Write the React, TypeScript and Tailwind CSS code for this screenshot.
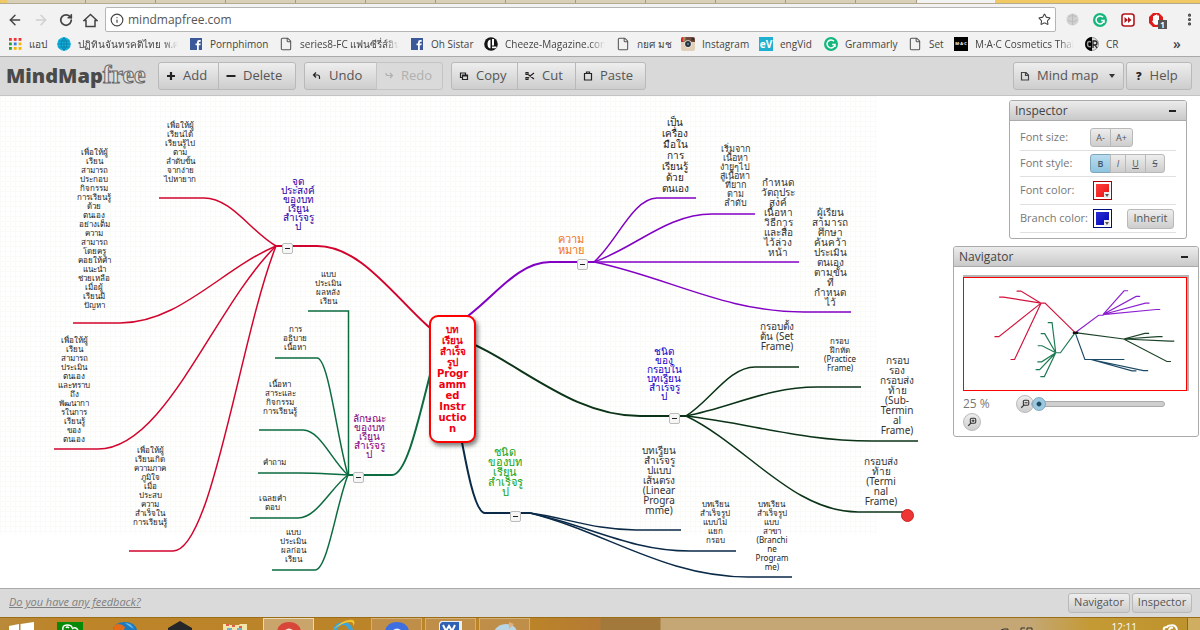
import React from "react";
import { ArrowLeft, ArrowRight, Info, RotateCw, Star, EllipsisVertical, File } from "lucide-react";

/* ---------- Mind map data ---------- */

type Topic = { x: number; y: number; style: string; text: string };

const SMALL = "text-[8px] leading-[9px] text-[#222]";
const MEDIUM = "text-[10px] leading-[10px] text-[#333]";
const LARGE = "text-[10px] leading-[11px] text-[#222]";

const topics: Topic[] = [
  { x: 180, y: 24, style: SMALL, text: "เพื่อให้ผู้\nเรียนได้\nเรียนรู้ไป\nตาม\nลำดับขั้น\nจากง่าย\nไปหายาก" },
  { x: 94, y: 51, style: SMALL, text: "เพื่อให้ผู้\nเรียน\nสามารถ\nประกอบ\nกิจกรรม\nการเรียนรู้\nด้วย\nตนเอง\nอย่างเต็ม\nความ\nสามารถ\nโดยครู\nคอยให้คำ\nแนะนำ\nช่วยเหลือ\nเมื่อผู้\nเรียนมี\nปัญหา" },
  { x: 74, y: 239, style: SMALL, text: "เพื่อให้ผู้\nเรียน\nสามารถ\nประเมิน\nตนเอง\nและทราบ\nถึง\nพัฒนากา\nรในการ\nเรียนรู้\nของ\nตนเอง" },
  { x: 150, y: 349, style: SMALL, text: "เพื่อให้ผู้\nเรียนเกิด\nความภาค\nภูมิใจ\nเมื่อ\nประสบ\nความ\nสำเร็จใน\nการเรียนรู้" },
  { x: 298, y: 81, style: "text-[10px] leading-[9px] font-medium text-[#2b00a8]", text: "จุด\nประสงค์\nของบท\nเรียน\nสำเร็จรู\nป" },
  { x: 328, y: 173, style: SMALL, text: "แบบ\nประเมิน\nผลหลัง\nเรียน" },
  { x: 295, y: 228, style: SMALL, text: "การ\nอธิบาย\nเนื้อหา" },
  { x: 280, y: 283, style: SMALL, text: "เนื้อหา\nสาระและ\nกิจกรรม\nการเรียนรู้" },
  { x: 274, y: 361, style: SMALL, text: "คำถาม" },
  { x: 272, y: 397, style: SMALL, text: "เฉลยคำ\nตอบ" },
  { x: 293, y: 431, style: SMALL, text: "แบบ\nประเมิน\nผลก่อน\nเรียน" },
  { x: 369, y: 318, style: "text-[10px] leading-[9px] font-medium text-[#85007d]", text: "ลักษณะ\nของบท\nเรียน\nสำเร็จรู\nป" },
  { x: 571, y: 137, style: "text-[11px] leading-[11px] font-medium text-[#f0731c]", text: "ความ\nหมาย" },
  { x: 675, y: 21, style: LARGE, text: "เป็น\nเครื่อง\nมือใน\nการ\nเรียนรู้\nด้วย\nตนเอง" },
  { x: 735, y: 48, style: "text-[9px] leading-[9px] text-[#333]", text: "เริ่มจาก\nเนื้อหา\nง่ายๆไป\nสู่เนื้อหา\nที่ยาก\nตาม\nลำดับ" },
  { x: 778, y: 81, style: MEDIUM, text: "กำหนด\nวัตถุประ\nสงค์\nเนื้อหา\nวิธีการ\nและสื่อ\nไว้ล่วง\nหน้า" },
  { x: 830, y: 111, style: MEDIUM, text: "ผู้เรียน\nสามารถ\nศึกษา\nค้นคว้า\nประเมิน\nตนเอง\nตามขั้น\nที่\nกำหนด\nไว้" },
  { x: 664, y: 251, style: "text-[10px] leading-[9px] font-medium text-[#1400c8]", text: "ชนิด\nของ\nกรอบใน\nบทเรียน\nสำเร็จรู\nป" },
  { x: 777, y: 225, style: MEDIUM, text: "กรอบตั้ง\nต้น (Set\nFrame)" },
  { x: 840, y: 240, style: SMALL, text: "กรอบ\nฝึกหัด\n(Practice\nFrame)" },
  { x: 897, y: 259, style: MEDIUM, text: "กรอบ\nรอง\nกรอบส่ง\nท้าย\n(Sub-\nTermin\nal\nFrame)" },
  { x: 881, y: 360, style: MEDIUM, text: "กรอบส่ง\nท้าย\n(Termi\nnal\nFrame)" },
  { x: 659, y: 349, style: MEDIUM, text: "บทเรียน\nสำเร็จรู\nปแบบ\nเส้นตรง\n(Linear\nProgra\nmme)" },
  { x: 715, y: 403, style: SMALL, text: "บทเรียน\nสำเร็จรูป\nแบบไม่\nแยก\nกรอบ" },
  { x: 772, y: 403, style: SMALL, text: "บทเรียน\nสำเร็จรูป\nแบบ\nสาขา\n(Branchi\nne\nProgram\nme)" },
  { x: 505, y: 351, style: "text-[11px] leading-[10px] font-medium text-[#12a312]", text: "ชนิด\nของบท\nเรียน\nสำเร็จรู\nป" },
];

const handles = [
  { x: 282, y: 147 },
  { x: 577, y: 163 },
  { x: 353, y: 376 },
  { x: 669, y: 317 },
  { x: 510, y: 415 },
];

type Twig = [number, number, number]; // outer x, inner x, y

const branches: { color: string; from: [number, number]; to: [number, number]; hub: [number, number]; twigs: Twig[] }[] = [
  { color: "#d2042d", from: [452, 249], to: [317, 150], hub: [276, 150], twigs: [[159, 204, 102], [73, 120, 227], [54, 98, 353], [129, 173, 455]] },
  { color: "#8200c4", from: [455, 229], to: [550, 166], hub: [594, 166], twigs: [[696, 657, 102], [755, 712, 118], [799, 750, 166], [851, 804, 216]] },
  { color: "#0c6b40", from: [446, 226], to: [392, 379], hub: [348, 379], twigs: [[275, 317, 262], [259, 303, 334], [258, 300, 377], [250, 298, 422], [272, 315, 474]] },
  { color: "#0b3318", from: [452, 239], to: [640, 320], hub: [686, 320], twigs: [[799, 755, 271], [861, 817, 291], [918, 872, 345], [908, 858, 416]] },
  { color: "#0a2a48", from: [442, 249], to: [485, 417], hub: [530, 417], twigs: [[681, 636, 434], [736, 690, 455], [792, 748, 481]] },
];

function curve([cx, cy]: [number, number], [px, py]: [number, number]) {
  const w = px - cx;
  const h = py - cy;
  return `C${cx + w * 0.38} ${cy} ${cx + w * 0.65} ${cy + h * 0.7} ${px} ${py}`;
}

function Branches() {
  return (
    <svg className="absolute left-0 top-0 h-[492px] w-[1000px]" viewBox="0 0 1000 492" fill="none" aria-hidden="true">
      {branches.map((b) => (
        <g key={b.color} stroke={b.color}>
          <path strokeWidth="2" d={`M${b.hub[0]} ${b.hub[1]} L${b.to[0]} ${b.to[1]} ${curve(b.to, b.from)}`} />
          {b.twigs.map(([outer, inner, y]) => (
            <path key={y} strokeWidth="1.5" d={`M${outer} ${y} H${inner} ${curve([inner, y], b.hub)}`} />
          ))}
        </g>
      ))}
      <path d="M308 215 H348.500 V379" stroke="#0c6b40" strokeWidth="1.500" />
    </svg>
  );
}

/* ---------- Small shared parts ---------- */

const FACE = "border border-[#b9b9b9] bg-linear-to-b from-[#eeeeee] to-[#cdcdcd] text-[#555]";

function ToolIcon({ children }: { children: React.ReactNode }) {
  return (
    <svg className="size-3 shrink-0" viewBox="0 0 12 12" fill="none" stroke="currentColor" strokeWidth="1.2" aria-hidden="true">
      {children}
    </svg>
  );
}

const icons = {
  add: <path d="M6 2v8M2 6h8" strokeWidth="2.200" stroke="#222" />,
  remove: <path d="M1.500 6h9" strokeWidth="2" stroke="#222" />,
  undo: <path d="M5 2.500 2.500 5 5 7.500M2.500 5h4q2 0 2 2v2" stroke="#222" />,
  redo: <path d="M7 3 9.500 5.500 7 8M9.500 5.500H5q-2 0-2-2V3" />,
  copy: <path d="M4 7.500H2.500V3h5v1.500M4.500 5h5v4.500h-5zM4.500 6h5" stroke="#222" />,
  cut: <path d="M3.500 4 10 9M3.500 8 10 3M2 2.500h2v2H2zM2 7.500h2v2H2z" stroke="#222" />,
  paste: <path d="M2.500 3.500h7v6.500h-7zM4.500 3.500V2h3v1.500" stroke="#222" />,
  doc: <path d="M2.500 2.500h4.500l2.500 2.500V10h-7zM6.500 2.500v3h3" stroke="#444" />,
};

function ToolButton({ icon, label, className, disabled }: { icon: React.ReactNode; label: string; className: string; disabled?: boolean }) {
  return (
    <button
      type="button"
      disabled={disabled}
      className={`-ml-px flex h-7 items-center gap-1.5 pl-[6px] ${
        disabled ? "border border-[#c4c4c4] bg-[#dadada] text-[#b0b0b0]" : FACE
      } ${className}`}
    >
      <ToolIcon>{icon}</ToolIcon>
      {label}
    </button>
  );
}

/* ---------- Browser chrome ---------- */

function Facebook() {
  return (
    <svg viewBox="0 0 14 14" className="size-3.5">
      <rect x="1" y="1" width="12" height="12" fill="#3b5998" />
      <path d="M8 13V8.300H6.500V6.500H8V5.400Q8 3 10.200 3h1.500v1.800h-1Q9.800 4.800 9.800 5.700v.8h1.900l-.3 1.800H9.800V13z" fill="#fff" />
    </svg>
  );
}

function Page() {
  return <File className="size-3.5 text-[#555]" strokeWidth={1.8} />;
}

function AppsGrid() {
  const colors = ["#e33", "#e33", "#e33", "#2a9d3a", "#3b78e7", "#f4b400", "#2a9d3a", "#f4b400", "#f4b400"];
  return (
    <svg viewBox="0 0 14 14" className="size-3.5">
      {colors.map((c, i) => (
        <rect key={i} x={1 + (i % 3) * 4.800} y={1 + Math.floor(i / 3) * 4.500} width="2.800" height="2.800" fill={c} />
      ))}
    </svg>
  );
}

function Globe() {
  return (
    <svg viewBox="0 0 14 14" className="size-3.5" fill="none">
      <circle cx="7" cy="7" r="6.800" fill="#12b0dc" />
      <path d="M0.500 7h13M1.500 4h11M1.500 10h11M7 0.500v13M7 .5q-6 6.500 0 13M7 .5q6 6.500 0 13" stroke="#0a7299" strokeWidth=".6" />
    </svg>
  );
}

function Cheeze() {
  return (
    <svg viewBox="0 0 14 14" className="size-3.5">
      <circle cx="7" cy="7" r="6.800" fill="#151515" />
      <path d="M6.500 2.500Q3.500 3 3.500 7t3 4.500zM8 2h2v6.500H8zM8 9.500h4.500v1.800H8z" fill="#fff" />
    </svg>
  );
}

function Instagram() {
  return (
    <svg viewBox="0 0 14 14" className="size-3.5">
      <rect width="14" height="14" rx="2" fill="#e2cfb8" />
      <path d="M0 5V2q0-2 2-2h10q2 0 2 2v3z" fill="#73493a" />
      <path d="M1 0h1.500v4.500H1z" fill="#d33" />
      <path d="M2.500 0h1.200v4.500H2.500z" fill="#e9b42a" />
      <path d="M3.700 0h1v4.500h-1z" fill="#4b86c8" />
      <circle cx="7" cy="7" r="3.700" fill="#f1e8dc" />
      <circle cx="7" cy="7" r="2.900" fill="#24303c" />
      <circle cx="7" cy="7" r="1.200" fill="#5b7894" />
      <rect x="10.500" y="1" width="2.500" height="2.500" fill="#26323c" />
    </svg>
  );
}

function Grammarly() {
  return (
    <svg viewBox="0 0 14 14" className="size-3.5" fill="none">
      <circle cx="7" cy="7" r="7" fill="#15b77d" />
      <path d="M10 4.200A4 4 0 1 0 11 7.500H8.200M11 7.500v2.500" stroke="#fff" strokeWidth="1.500" />
    </svg>
  );
}

const Badge = ({ text, className }: { text: string; className: string }) => (
  <span className={`flex size-3.5 items-center justify-center overflow-hidden ${className}`}>{text}</span>
);

const FADE = "overflow-hidden mask-r-from-85% mask-r-to-100%";

const bookmarks: { icon: React.ReactNode; label: string; width: string }[] = [
  { icon: <AppsGrid />, label: "แอป", width: "w-[17px]" },
  { icon: <Globe />, label: "ปฏิทินจันทรคติไทย พ.ศ.2", width: `w-[100px] ${FADE}` },
  { icon: <Facebook />, label: "Pornphimon", width: "w-[58px]" },
  { icon: <Page />, label: "series8-FC แฟนซีรี่ส์อิน", width: `w-[99px] ${FADE}` },
  { icon: <Facebook />, label: "Oh Sistar", width: "w-[42px]" },
  { icon: <Cheeze />, label: "Cheeze-Magazine.com", width: `w-[100px] ${FADE}` },
  { icon: <Page />, label: "กยศ มช", width: "w-[33px]" },
  { icon: <Instagram />, label: "Instagram", width: "w-[46px]" },
  { icon: <Badge text="eV" className="bg-[#1fb0d0] text-[10px] font-bold text-white" />, label: "engVid", width: "w-[33px]" },
  { icon: <Grammarly />, label: "Grammarly", width: "w-[52px]" },
  { icon: <Page />, label: "Set", width: "w-[14px]" },
  { icon: <Badge text="M·A·C" className="bg-black text-[4px] font-bold text-white" />, label: "M·A·C Cosmetics Thai", width: `w-[99px] ${FADE}` },
  {
    icon: (
      <svg viewBox="0 0 14 14" className="size-3.5" fill="none">
        <circle cx="7" cy="7" r="6.500" fill="#ddd" stroke="#999" />
        <path d="M7 0a7 7 0 0 0 0 14z" fill="#000" />
        <path d="M6 5Q2.500 3.500 2.500 7T6 9.500" stroke="#999" strokeWidth="1.500" />
        <path d="M8 11V4h2q2 0 2 2t-2 2H8M10 8l2 3" stroke="#222" strokeWidth="1.300" />
      </svg>
    ),
    label: "CR",
    width: "w-[14px]",
  },
];

function BrowserChrome() {
  return (
    <div className="shrink-0 border-b border-[#a9a9a9] bg-[#f2f2f2] font-['Open_Sans','Noto_Sans',sans-serif] text-[#444]">
      <div className="flex h-1 overflow-hidden border-b border-[#b3aa90] bg-[#d8d0b8]">
        <i className="w-4 shrink-0 bg-linear-to-r from-[#f0c864] from-40% to-[#d8d0b8] to-50%" />
        {[0, 1, 2, 3, 4, 5, 6, 7, 8, 9, 10, 11].map((n) => (
          <i key={n} className="w-[70px] shrink-0 border-r border-[#a59c80]" />
        ))}
        <i className="w-[61px] shrink-0 border-r border-[#a59c80]" />
        <i className="h-1 w-[78px] shrink-0 bg-[#f2f2f2]" />
        <i className="flex-1 bg-[#f0c864]" />
      </div>
      <div className="flex h-7 items-end px-[7px]">
        <nav className="flex h-6 items-center gap-[10px]" aria-label="Browser">
          <button type="button" aria-label="Back"><ArrowLeft className="size-4" strokeWidth={2.200} /></button>
          <button type="button" aria-label="Forward" disabled className="text-[#d0d0d0]"><ArrowRight className="size-4" strokeWidth={2.200} /></button>
          <button type="button" aria-label="Reload"><RotateCw className="size-[14px]" strokeWidth={3} /></button>
          <button type="button" aria-label="Home">
            <svg viewBox="0 0 15 15" className="size-[15px]" fill="none" stroke="currentColor" strokeWidth="1.500"><path d="M1 7.500 7.500 1.500 14 7.500H12V13.500H3V7.500z" /></svg>
          </button>
        </nav>
        <div className="ml-[7px] flex h-[25px] flex-1 items-center gap-1 rounded-[2px] border border-[#b5b5b5] bg-white px-1">
          <Info className="size-[14px]" strokeWidth={2} />
          <input aria-label="Address" defaultValue="mindmapfree.com" className="min-w-0 flex-1 bg-transparent text-[12px] text-[#555] outline-none" />
          <button type="button" aria-label="Bookmark this page"><Star className="size-[13px]" strokeWidth={2} /></button>
        </div>
        <div className="flex h-[25px] items-center gap-[14px] pl-[10px]">
          <svg viewBox="0 0 14 14" className="size-[13px]"><circle cx="7" cy="7" r="6.500" fill="#d0d0d0" /><path d="M3 4q4-3 8 0M2 8q5 3 10 0M7 1v12" stroke="#bbb" fill="none" /></svg>
          <Grammarly />
          <svg viewBox="0 0 14 14" className="size-3.5" fill="none"><rect x="1" y="1" width="12" height="12" rx="2.500" fill="#fff" stroke="#b3161b" strokeWidth="1.600" /><path d="M3.500 4 7 7 3.500 10zM7 4l3.500 3L7 10z" fill="#b3161b" /></svg>
          <span className="relative">
            <svg viewBox="0 0 14 14" className="size-3.5"><path d="M4 0h6l4 4v6l-4 4H4l-4-4V4z" fill="#e01b1b" /><path d="M4 6V3h1.500V2H7v-.5h1.300V2.500H10V9q0 3-3 3-2 0-4-4l1-.5z" fill="#fff" /></svg>
            <span className="absolute -right-1 top-[7px] h-[9px] w-[9px] bg-[#555] text-center text-[8px] leading-[9px] font-bold text-white">1</span>
          </span>
          <button type="button" aria-label="Menu" className="-mr-1 ml-[5px]"><EllipsisVertical className="size-[15px]" strokeWidth={3} /></button>
        </div>
      </div>
      <div className="flex h-6 items-center gap-[11px] pl-2">
        {bookmarks.map((b, i) => (
          <a key={i} href="#" className="flex shrink-0 items-center gap-[7px] text-[10px] leading-[16px] whitespace-nowrap">
            <span className="size-3.5 shrink-0">{b.icon}</span>
            <span className={b.width}>{b.label}</span>
          </a>
        ))}
        <button type="button" aria-label="More bookmarks" className="ml-[42px] text-[14px] leading-[14px] font-semibold">»</button>
      </div>
    </div>
  );
}

/* ---------- Application ---------- */

function AppHeader() {
  return (
    <header className="flex h-[39px] shrink-0 items-center border-b border-[#c4c4c4] bg-[#d9d9d9] pr-2 pl-[6px] text-[13px]">
      <h1 className="flex w-[153px] items-baseline text-[20px] leading-7 font-extrabold text-[#4a4a4a]">
        MindMap
        <span className="font-['Liberation_Serif',serif] text-[26px] leading-6 font-bold text-[#e4e4e4] [-webkit-text-stroke:1px_#666]">free</span>
      </h1>
      <div className="flex">
        <ToolButton icon={icons.add} label="Add" className="w-[61px] rounded-l-[3px]" />
        <ToolButton icon={icons.remove} label="Delete" className="w-[78px] rounded-r-[3px]" />
      </div>
      <div className="ml-[9px] flex">
        <ToolButton icon={icons.undo} label="Undo" className="w-[73px] rounded-l-[3px]" />
        <ToolButton icon={icons.redo} label="Redo" className="w-[67px] rounded-r-[3px]" disabled />
      </div>
      <div className="ml-[9px] flex">
        <ToolButton icon={icons.copy} label="Copy" className="w-[67px] rounded-l-[3px]" />
        <ToolButton icon={icons.cut} label="Cut" className="w-[59px]" />
        <ToolButton icon={icons.paste} label="Paste" className="w-[71px] rounded-r-[3px]" />
      </div>
      <div className="ml-auto flex gap-[2px]">
        <button type="button" className={`flex h-7 w-[111px] items-center gap-[6px] rounded-[3px] pl-[5px] ${FACE}`}>
          <ToolIcon>{icons.doc}</ToolIcon>
          Mind map
          <svg viewBox="0 0 8 8" className="ml-auto mr-[7px] size-2"><path d="M1 2h6L4 6z" fill="#333" /></svg>
        </button>
        <button type="button" className={`flex h-7 w-[66px] items-center gap-2 rounded-[3px] pl-[9px] ${FACE}`}>
          <span className="text-[11px] font-extrabold text-[#222]">?</span>
          Help
        </button>
      </div>
    </header>
  );
}

function Panel({ title, className, children }: { title: string; className: string; children: React.ReactNode }) {
  return (
    <section className={`rounded-[3px] border border-[#aaa] bg-white ${className}`}>
      <div className="flex h-5 items-center justify-between rounded-t-[2px] border-b border-[#aaa] bg-linear-to-b from-[#ececec] to-[#c9c9c9] pr-[10px] pl-[5px]">
        <h2 className="text-[12px] leading-5 text-[#444]">{title}</h2>
        <button type="button" aria-label={`Minimize ${title}`} className="h-[2px] w-[7px] bg-[#222]" />
      </div>
      {children}
    </section>
  );
}

function InspectorRow({ label, className, children }: { label: string; className: string; children: React.ReactNode }) {
  return (
    <div className={`flex items-center border-b border-[#e0e0e0] ${className}`}>
      <span className="w-[71px] shrink-0">{label}</span>
      {children}
    </div>
  );
}

function Swatch({ label, ring, color }: { label: string; ring: string; color: string }) {
  return (
    <button type="button" aria-label={label} className={`relative ml-[2px] size-[19px] border bg-white p-[2px] ${ring}`}>
      <span className={`block size-full bg-linear-to-br ${color}`} />
      <svg viewBox="0 0 6 6" className="absolute right-px bottom-px size-1.5"><rect width="6" height="6" fill="#eee" /><path d="M1 2h4L3 5z" fill="#555" /></svg>
    </button>
  );
}

const MINI = `h-[19px] text-[9px] ${FACE} -ml-px`;

function Inspector() {
  return (
    <Panel title="Inspector" className="mr-3 w-[178px]">
      <div className="px-[10px] pb-[5px] text-[11px] text-[#777]">
        <InspectorRow label="Font size:" className="h-[30px] pt-1">
          <button type="button" className={`w-[21px] rounded-l-[3px] ${MINI}`}>A-</button>
          <button type="button" className={`w-[23px] rounded-r-[3px] ${MINI}`}>A+</button>
        </InspectorRow>
        <InspectorRow label="Font style:" className="h-[26px]">
          <button type="button" className="-ml-px h-[19px] w-[21px] rounded-l-[3px] border border-[#7fa5bb] bg-linear-to-b from-[#b9ddf0] to-[#8fc3df] text-[9px] font-semibold text-[#456]">B</button>
          <button type="button" className={`w-4 italic ${MINI}`}>I</button>
          <button type="button" className={`w-[21px] underline ${MINI}`}>U</button>
          <button type="button" className={`w-5 rounded-r-[3px] line-through ${MINI}`}>S</button>
        </InspectorRow>
        <InspectorRow label="Font color:" className="h-7">
          <Swatch label="Font color" ring="border-[#a00]" color="from-[#ff4040] to-[#e80000]" />
        </InspectorRow>
        <InspectorRow label="Branch color:" className="h-7">
          <Swatch label="Branch color" ring="border-[#00107a]" color="from-[#2a2ad8] to-[#0000b0]" />
          <button type="button" className={`ml-[15px] h-5 w-[47px] shrink-0 rounded-[3px] ${FACE}`}>Inherit</button>
        </InspectorRow>
      </div>
    </Panel>
  );
}

function MiniMap() {
  return (
    <svg viewBox="78 115 663 334" className="block h-[112px] w-full" fill="none" strokeWidth="3.500" preserveAspectRatio="none" role="img" aria-label="Map overview">
      <g stroke="#d2143c">
        <path d="M410 278 320 190h-12M308 190 248 154h-13M308 190 196 172h-13M308 190 182 290h-13M308 190 229 358h-12" />
      </g>
      <g stroke="#8c1fd0">
        <path d="M410 278 480 226h15M493 224 556 153h12M493 224 592 170h12M493 224 620 190h12M493 224 652 209h12" />
      </g>
      <g stroke="#1d7a54">
        <path d="M410 278 366 338h-14M352 338 341 248h-13M352 338 319 281h-12M352 338 311 317h-13M352 338 310 365h-13M352 338 304 388h-12M352 338 318 409h-12" />
      </g>
      <g stroke="#1c4328">
        <path d="M410 278 555 297M555 297 618 280h13M555 297 658 290h13M555 297 692 303h14M555 297 684 364h12" />
      </g>
      <g stroke="#1c4a66">
        <path d="M410 278 439 358h18M457 358h100M457 358 580 392h13M457 358 614 391h14" />
      </g>
      <rect x="403" y="275" width="16" height="7" fill="#111" />
    </svg>
  );
}

function ZoomIcon({ plus }: { plus?: boolean }) {
  return (
    <svg viewBox="0 0 12 12" className="size-2.5" fill="none" stroke="#333" strokeWidth="1.300">
      <rect x="4" y="1.500" width="6.500" height="6" rx="1.500" />
      <path d={plus ? "M5 7 1.500 10.500M5.500 4.500h3.500M7.300 3v3" : "M5 7 1.500 10.500M5.500 4.500h3.500"} />
    </svg>
  );
}

function Navigator() {
  return (
    <Panel title="Navigator" className="w-[246px]">
      <div className="px-[9px] pt-2 pb-[5px]">
        <div className="border-t-2 border-r-2 border-[#b5b5b5]">
          <div className="border border-[#f00]">
            <MiniMap />
          </div>
        </div>
        <div className="flex items-center pt-1">
          <output className="w-[53px] text-[12px] text-[#777]">25 %</output>
          <button type="button" aria-label="Zoom out" className={`flex size-[18px] items-center justify-center rounded-full ${FACE}`}><ZoomIcon /></button>
          <input
            type="range"
            aria-label="Zoom"
            min={25}
            max={300}
            defaultValue={25}
            className="-ml-[3px] h-[13px] w-[134px] appearance-none bg-transparent [&::-webkit-slider-runnable-track]:h-[6px] [&::-webkit-slider-runnable-track]:rounded-[3px] [&::-webkit-slider-runnable-track]:border [&::-webkit-slider-runnable-track]:border-[#aaa] [&::-webkit-slider-runnable-track]:bg-[#cfcfcf] [&::-webkit-slider-thumb]:-mt-[5px] [&::-webkit-slider-thumb]:size-[14px] [&::-webkit-slider-thumb]:appearance-none [&::-webkit-slider-thumb]:rounded-full [&::-webkit-slider-thumb]:border [&::-webkit-slider-thumb]:border-[#7fa9bf] [&::-webkit-slider-thumb]:bg-radial [&::-webkit-slider-thumb]:from-[#1b4a63] [&::-webkit-slider-thumb]:from-20% [&::-webkit-slider-thumb]:to-[#9cc9e0] [&::-webkit-slider-thumb]:to-35%"
          />
        </div>
        <button type="button" aria-label="Zoom in" className={`flex size-[18px] items-center justify-center rounded-full ${FACE}`}><ZoomIcon plus /></button>
      </div>
    </Panel>
  );
}

function Canvas() {
  return (
    <main className="relative min-h-0 flex-1 overflow-hidden bg-white">
      <div className="absolute left-0 top-0 h-[438px] w-[877px] bg-[linear-gradient(#fafaf6_1px,transparent_1px),linear-gradient(90deg,#fafaf6_1px,transparent_1px)] bg-size-[5px_5px]" />
      <Branches />
      {topics.map((t, i) => (
        <div
          key={i}
          className={`absolute -translate-x-1/2 text-center font-['Noto_Sans','Open_Sans',sans-serif] whitespace-pre ${t.style}`}
          style={{ left: t.x, top: t.y }}
        >
          {t.text}
        </div>
      ))}
      <div className="absolute left-[429px] top-[219px] w-[47px] rounded-[9px] border-2 border-[#f00] bg-white py-[7px] text-center font-['DejaVu_Sans','Noto_Sans',sans-serif] text-[10px] leading-[11px] font-bold whitespace-pre text-[#f00010] shadow-[2px_3px_4px_rgba(0,0,0,0.5)]">
        {"บท\nเรียน\nสำเร็จ\nรูป\nProgr\namm\ned\nInstr\nuctio\nn"}
      </div>
      {handles.map((h) => (
        <button
          key={h.x}
          type="button"
          aria-label="Collapse branch"
          className="absolute flex size-[11px] items-center justify-center rounded-[2px] border border-[#bbb] bg-[#f6f6f6]"
          style={{ left: h.x, top: h.y }}
        >
          <span className="h-px w-[5px] bg-[#222]" />
        </button>
      ))}
      <span className="absolute left-[901px] top-[413px] size-[13px] rounded-full border border-[#c22] bg-[#ee3535]" />
      <div className="absolute top-1 right-0 flex flex-col items-end gap-[7px] pr-px">
        <Inspector />
        <Navigator />
      </div>
    </main>
  );
}

function AppFooter() {
  return (
    <footer className="flex h-[29px] shrink-0 items-center justify-between border-t border-[#aaa] bg-[#dadada] pr-2 pb-px pl-[9px] text-[11px]">
      <a href="#" className="text-[#808080] italic underline">Do you have any feedback?</a>
      <div className="flex gap-[2px]">
        <button type="button" className={`h-5 w-[62px] rounded-[3px] ${FACE}`}>Navigator</button>
        <button type="button" className={`h-5 w-[60px] rounded-[3px] ${FACE}`}>Inspector</button>
      </div>
    </footer>
  );
}

const task = "flex h-full w-[51px] shrink-0 justify-center";
const openTask = "border border-b-0 border-[#d3b07a] bg-[#bf8f4a]";

function Taskbar() {
  return (
    <div className="flex h-[13px] shrink-0 overflow-hidden border-t border-[#9a6d16] bg-[linear-gradient(90deg,#b98a3a_0px,#bd8428_60px,#bb8428_530px,#b57a35_600px,#a2783b_601px,#a2783b_660px,#c4a775_661px,#c4a775_1030px,#c49a35_1090px,#bd922c_1200px)]">
      <div className="w-[44px] shrink-0">
        <svg viewBox="0 0 44 12" className="h-3 w-[44px]"><path d="M9 8l10-2v6H9zM20.500 6 34 4v8H20.500z" fill="#fff" /></svg>
      </div>
      <div className={task}><svg viewBox="0 0 26 12" className="h-3 w-[26px]"><path d="M0 4h26v8H0z" fill="#078a07" /><path d="M6 12q-1-5 4-5 5 0 5 3M9 10q1-2 3 0M15 11q3-3 6 1" stroke="#fff" strokeWidth="1.500" fill="none" /></svg></div>
      <div className={`ml-1 ${task}`}><svg viewBox="0 0 26 12" className="h-3 w-[26px]"><path d="M1 12Q2 4 13 4q10 0 12 8z" fill="#1e7ac0" /><path d="M1 12Q2 6 6 6q4 0 7 3l-1 3z" fill="#e66b16" /><path d="M13 5q6 0 9 6l-5-3z" fill="#65bff0" /></svg></div>
      <div className={`ml-1 ${task}`}><svg viewBox="0 0 26 12" className="h-3 w-[26px]"><path d="M13 3 25 10v2H1v-2z" fill="#24262a" /></svg></div>
      <div className={`ml-1 ${task}`}><svg viewBox="0 0 28 12" className="h-3 w-[28px]"><path d="M2 12V6h5l2 1h9l1-1h7v6z" fill="#f3e6ac" /><path d="M5 7h3M11 8h3M18 9h3" stroke="#d33" strokeWidth="1.500" /><path d="M6 11h5M16 11h5" stroke="#4c9dd0" strokeWidth="1.500" /></svg></div>
      <div className="ml-[3px] flex h-full w-[51px] shrink-0 justify-center border border-b-0 border-[#ead9b8] bg-[#c9a56c]"><svg viewBox="0 0 26 12" className="h-3 w-[26px]"><path d="M1 12Q3 3 13 3q10 0 12 9z" fill="#d8463a" /><path d="M8 12q5-5 10 0z" fill="#f4e5da" /></svg></div>
      <div className={`ml-[3px] ${task}`}><svg viewBox="0 0 26 12" className="h-3 w-[26px]"><path d="M3 12Q5 4 13 4t10 8h-4q-2-5-6-5t-6 5z" fill="#39a6e0" /><path d="M3 12Q14 0 23 2q3 2 0 6 1-4-3-4Q13 4 3 12z" fill="#f2c52d" /></svg></div>
      <div className={`ml-[3px] ${openTask} ${task}`}><svg viewBox="0 0 26 12" className="h-3 w-[26px]"><path d="M1 12Q3 3 13 3q10 0 12 9z" fill="#3e6fe0" /><path d="M8 12q5-5 10 0z" fill="#e9eefc" /></svg></div>
      <div className={`ml-[3px] ${openTask} ${task}`}><svg viewBox="0 0 26 12" className="h-3 w-[26px]"><path d="M1 12V4l2-2h21v10z" fill="#e8f0fb" /><path d="M2 12V5l2-2h17v9z" fill="#2f62b5" /><path d="M5 6l3 6 3-5 3 5 3-6" stroke="#fff" strokeWidth="2" fill="none" /></svg></div>
      <div className={`ml-[3px] ${openTask} ${task}`}><svg viewBox="0 0 26 12" className="h-3 w-[26px]"><path d="M2 12Q6 5 14 5t11 7z" fill="#b9d6e4" /><path d="M17 3l5 2-5 5z" fill="#e0b080" /></svg></div>
      <div className="ml-auto flex shrink-0 text-white">
        <svg viewBox="0 0 40 12" className="h-3 w-10" fill="none" stroke="#333"><path d="M2 12l3-1h4v1M22 12v-2h4M28 12v-2h5v2" /></svg>
        <time className="ml-[73px] pt-[4px] text-[10px] leading-[11px]">12:11</time>
        <svg viewBox="0 0 20 12" className="ml-6 h-3 w-5" fill="none" stroke="#fff" strokeWidth="2"><path d="M3 12q-1-3 3-3 1-2 4-1.500 5-1 6 4.500M8 12q1-3 4-2" /></svg>
        <span className="ml-1.5 w-[13px] border-l border-[#8a6a24] bg-[#cfae62]" />
      </div>
    </div>
  );
}

export default function App() {
  return (
    <div className="flex h-screen flex-col overflow-hidden bg-white font-['Open_Sans','Noto_Sans',sans-serif]">
      <BrowserChrome />
      <AppHeader />
      <Canvas />
      <AppFooter />
      <Taskbar />
    </div>
  );
}
